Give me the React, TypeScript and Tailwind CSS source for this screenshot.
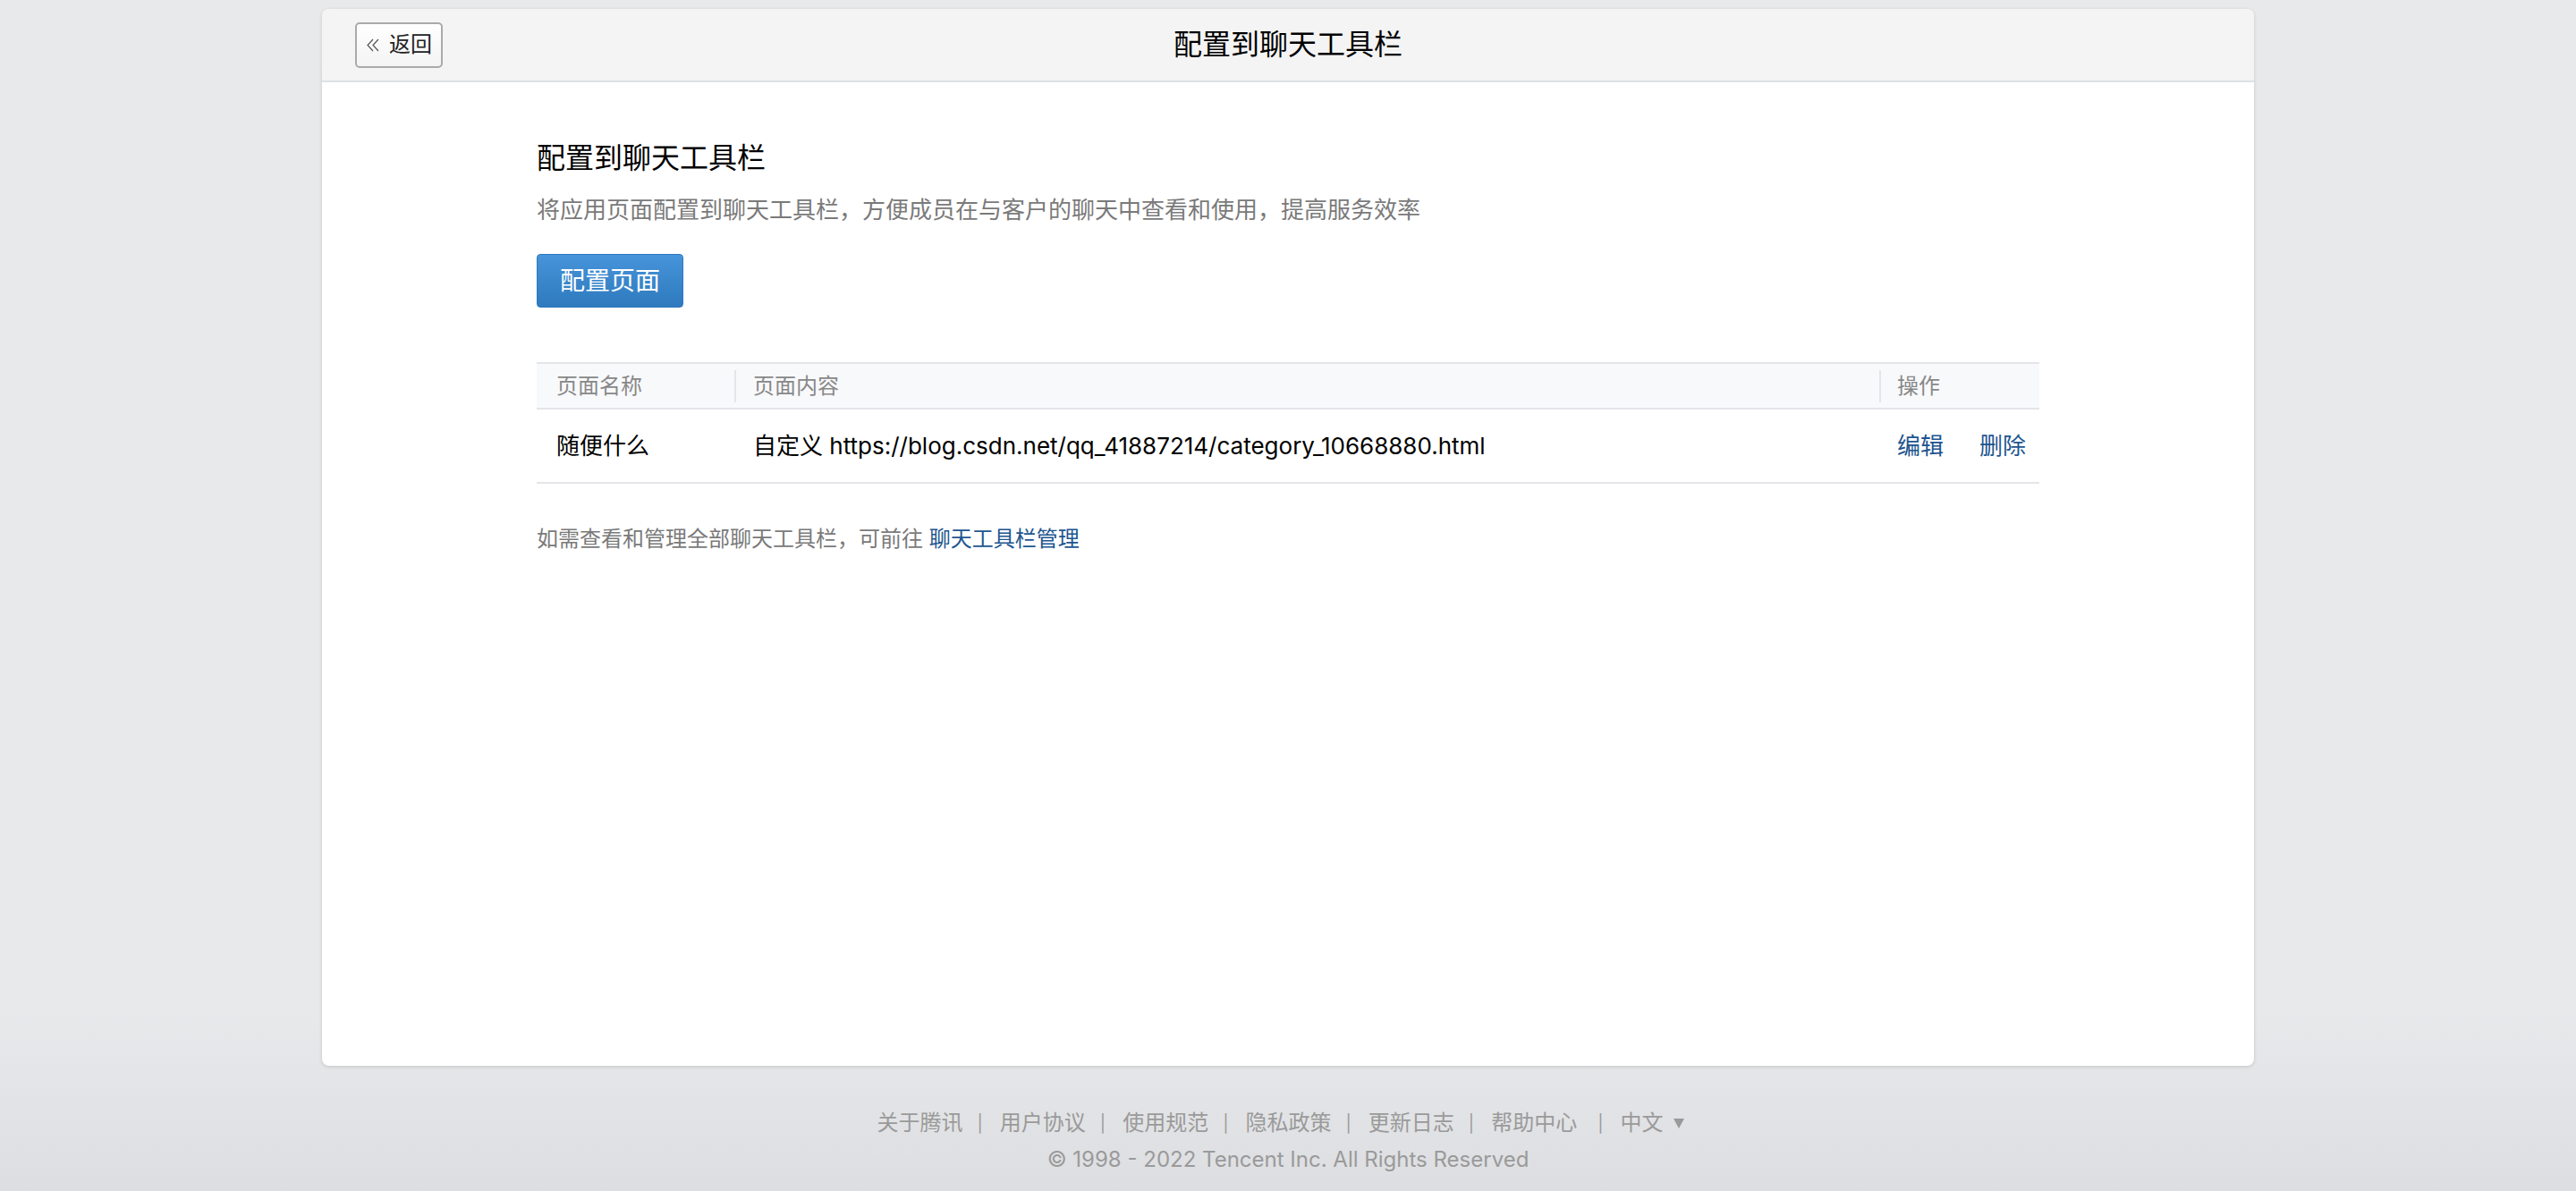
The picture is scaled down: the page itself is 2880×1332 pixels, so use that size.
export default function App() {
  const links = ["关于腾讯", "用户协议", "使用规范", "隐私政策", "更新日志", "帮助中心"];
  return (
    <div className="min-h-[1332px] bg-gradient-to-b from-[#e8e9eb] from-85% to-[#dddee1] pt-[10px] font-[Inter,'Noto_Sans_CJK_SC',sans-serif]">
      <div className="mx-auto w-[2160px] h-[1182px] bg-white rounded-[8px] shadow-[0_1px_4px_rgba(0,0,0,0.14)] overflow-hidden">
        <div className="h-[82px] bg-[#f4f4f4] border-b-2 border-[#dde0e4] grid grid-cols-[1fr_auto_1fr] items-center px-[37px]">
          <div>
            <button className="h-[51px] w-[98px] flex items-center gap-[10px] pl-[11px] border-2 border-[#aaaaaa] rounded-[5px] bg-gradient-to-b from-white to-[#f4f4f4] text-[24px] leading-none text-[#222]">
              <svg width="15" height="15" viewBox="0 0 15 15" fill="none" stroke="#555" strokeWidth="1.2">
                <path d="M7 1 L1 7.5 L7 14 M13 1 L7 7.5 L13 14" />
              </svg>
              <span>返回</span>
            </button>
          </div>
          <div className="text-[32px] leading-[44px] text-black">配置到聊天工具栏</div>
          <div />
        </div>

        <div className="px-[240px] pt-[63px]">
          <div className="text-[32px] leading-[44px] text-black">配置到聊天工具栏</div>
          <div className="mt-[18px] text-[26px] leading-[36px] text-[#7a7a7a]">
            将应用页面配置到聊天工具栏，方便成员在与客户的聊天中查看和使用，提高服务效率
          </div>
          <button className="mt-[31px] h-[60px] w-[164px] rounded-[4px] border border-[#2c78bf] bg-gradient-to-b from-[#4794db] to-[#2e7abd] text-white text-[28px] leading-none">
            配置页面
          </button>

          <div className="mt-[61px] border-t-2 border-[#e4e5e9]">
            <div className="h-[51px] bg-[#f8f9fb] border-b-2 border-[#e4e5e9] grid grid-cols-[221px_1fr_179px] items-center text-[24px] text-[#888]">
              <div className="pl-[22px]">页面名称</div>
              <div className="h-[36px] border-l-2 border-[#e4e5e9] flex items-center pl-[19px]">页面内容</div>
              <div className="h-[36px] border-l-2 border-[#e4e5e9] flex items-center pl-[18px]">操作</div>
            </div>
            <div className="h-[83px] border-b-2 border-[#e4e5e9] grid grid-cols-[221px_1fr_179px] items-center text-[26px] text-black">
              <div className="pl-[22px]">随便什么</div>
              <div className="pl-[21px]">自定义 https://blog.csdn.net/qq_41887214/category_10668880.html</div>
              <div className="pl-[20px] flex gap-[40px] text-[#1d5590]">
                <span>编辑</span>
                <span>删除</span>
              </div>
            </div>
          </div>

          <div className="mt-[44px] text-[24px] leading-[36px] text-[#7a7a7a]">
            如需查看和管理全部聊天工具栏，可前往 <span className="text-[#1d5590]">聊天工具栏管理</span>
          </div>
        </div>
      </div>

      <div className="mt-[46px] flex justify-center pr-[16px] text-[24px] leading-[36px] text-[#9a9a9a]">
        {links.map((l, i) => (
          <span key={l} className="flex items-center">
            <span>{l}</span>
            <span className={(i === 5 ? "ml-[23px]" : "ml-[16px]") + " mr-[19px] text-[19px] leading-none"}>|</span>
          </span>
        ))}
        <span className="flex items-center">
          <span>中文</span>
          <svg className="ml-[12px]" width="12" height="12" viewBox="0 0 12 12">
            <path d="M0 1 L12 1 L6 12 Z" fill="#9a9a9a" />
          </svg>
        </span>
      </div>
      <div className="mt-[5px] text-center text-[24px] leading-[36px] text-[#9a9a9a]">
        © 1998 - 2022 Tencent Inc. All Rights Reserved
      </div>
    </div>
  );
}
